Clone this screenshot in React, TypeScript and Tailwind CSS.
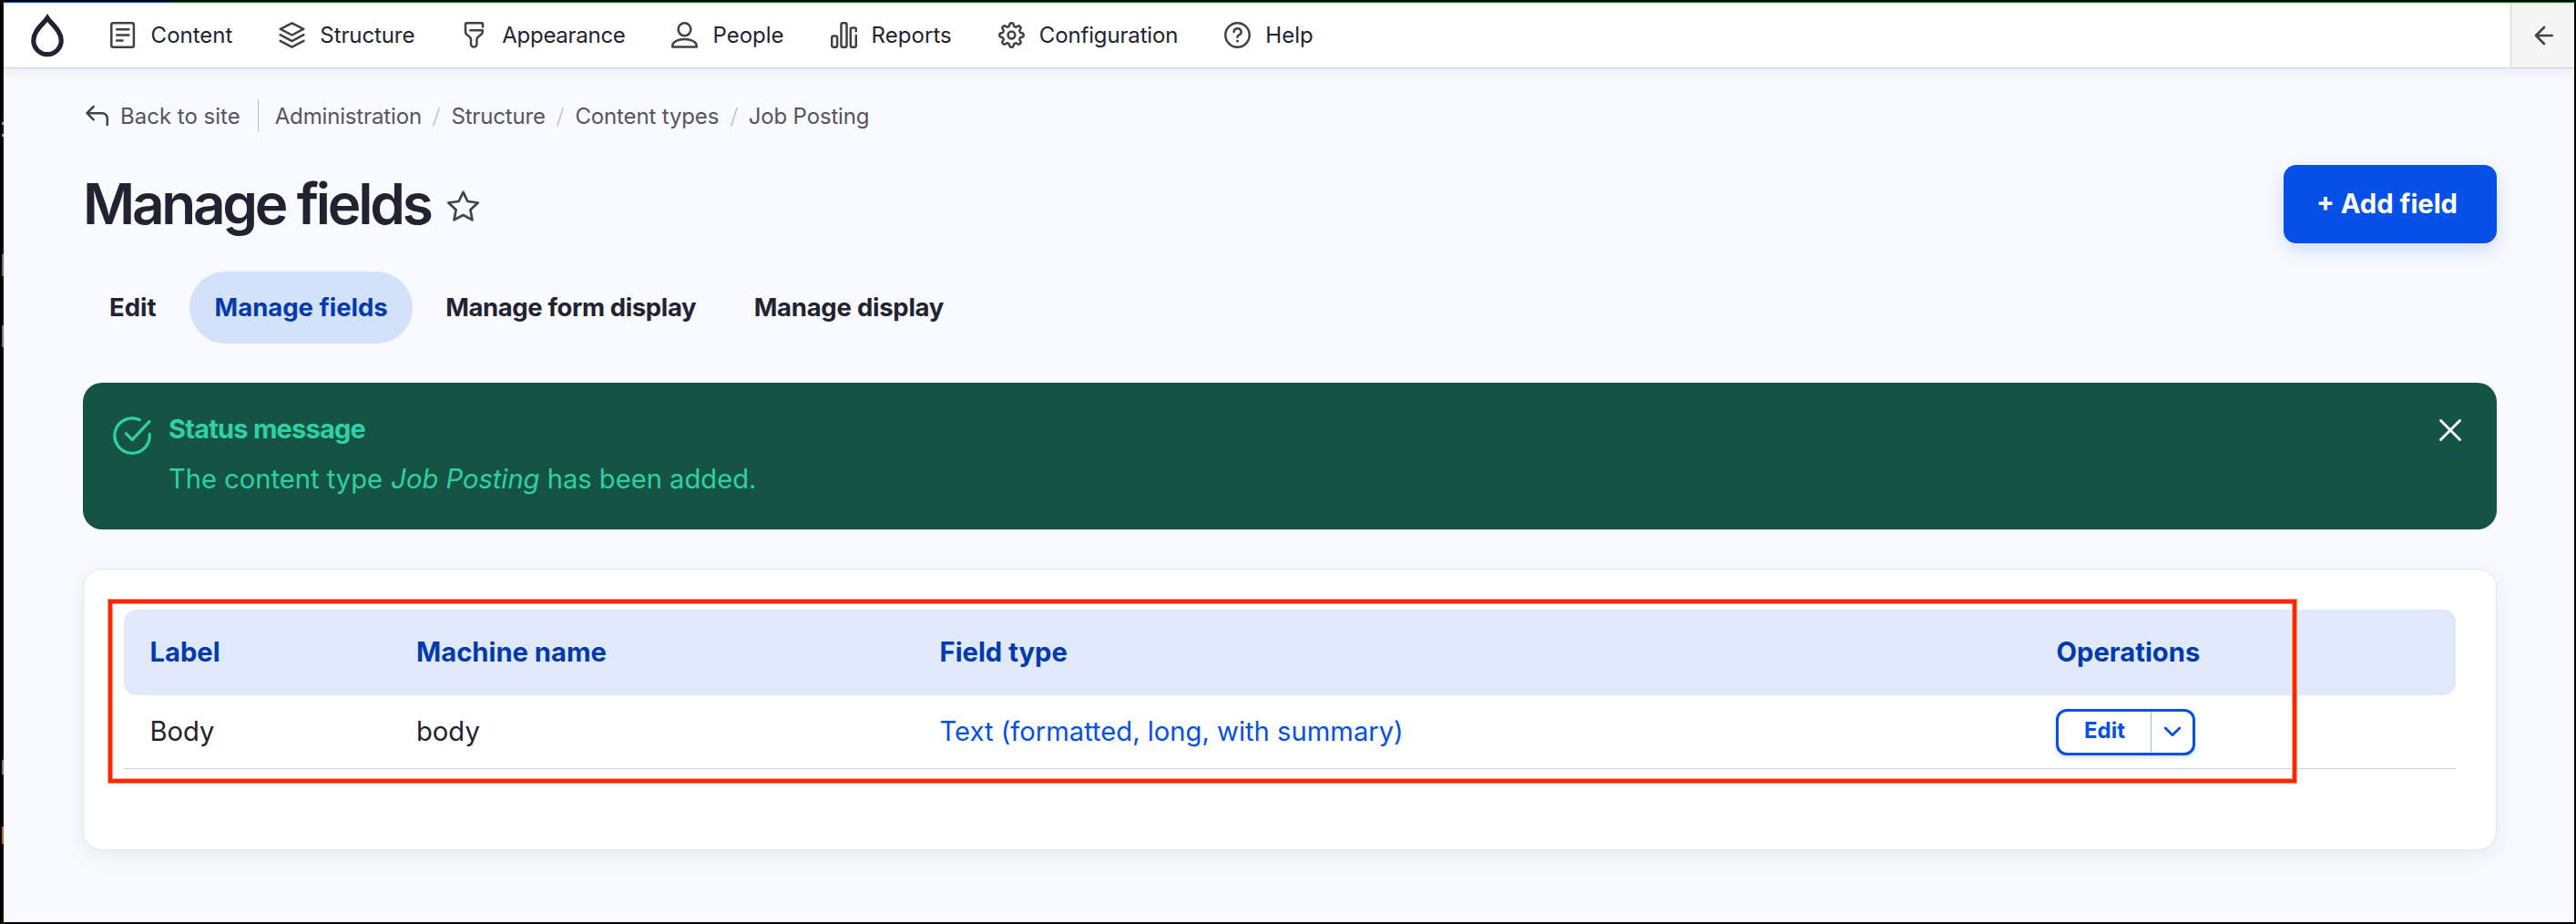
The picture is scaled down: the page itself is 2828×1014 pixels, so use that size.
import React from "react";

type IconProps = { children: React.ReactNode };

function Icon({ children }: IconProps) {
  return (
    <span className="flex w-9 shrink-0 items-center justify-center">
      <svg
        className="size-[29px] shrink-0 text-[#414247]"
        viewBox="0 0 29 29"
        fill="none"
        stroke="currentColor"
        strokeWidth="2.5"
        strokeLinecap="round"
        strokeLinejoin="round"
      >
        {children}
      </svg>
    </span>
  );
}

/* Closed outline of an eight-toothed gear centred in a 29-unit box. */
const gearPath =
  Array.from({ length: 160 }, (_, i) => {
    const a = (i / 160) * Math.PI * 2;
    const r = 11.5 + 1.75 * Math.tanh(1.9 * Math.cos(8 * a));
    const x = 14.5 + r * Math.sin(a);
    const y = 14.5 - r * Math.cos(a);
    return `${i ? "L" : "M"}${x.toFixed(2)} ${y.toFixed(2)}`;
  }).join("") + "Z";

const nav = [
  {
    label: "Content",
    className: "tracking-normal",
    icon: (
      <>
        <rect x="1.3" y="1.3" width="24.6" height="26.4" rx="2" />
        <path d="M7.2 8.3h13.200M7.200 14.400h13.200M7.200 20.500h6.400" />
      </>
    ),
  },
  {
    label: "Structure",
    className: "tracking-[-0.1px]",
    icon: (
      <path d="M14.5 1.4 27.2 7.9 14.5 14.5 1.8 7.9ZM1.6 14.2l12.9 6.9 12.9-6.9M1.6 20.8l12.9 6.9 12.9-6.9" />
    ),
  },
  {
    label: "Appearance",
    className: "tracking-[-0.28px]",
    icon: (
      <path d="M24 5.6V2.3a1 1 0 0 0-1-1H6a1 1 0 0 0-1 1v8.6c0 4.4 6 4.2 6 8.3v5.2a3.2 3.2 0 0 0 6.4 0v-5.2c0-4.1 6.3-3.9 6.3-8.3V9.3H10.3" />
    ),
  },
  {
    label: "People",
    className: "tracking-normal",
    icon: (
      <>
        <ellipse cx="14.5" cy="8.3" rx="6.9" ry="7" />
        <path d="M1.3 27.5v-1.3c0-4.3 6-7.2 13.2-7.2s13.2 2.9 13.2 7.2v1.3Z" />
      </>
    ),
  },
  {
    label: "Reports",
    className: "tracking-[0.05px]",
    icon: (
      <>
        <rect x="1.2" y="15.6" width="5.9" height="12.1" rx="1.6" />
        <rect x="11.5" y="1.3" width="6" height="26.4" rx="1.6" />
        <path d="M27.8 10.3V8a1.6 1.6 0 0 0-1.6-1.6h-2.8A1.6 1.6 0 0 0 21.8 8v18.1a1.6 1.6 0 0 0 1.6 1.6h2.8a1.6 1.6 0 0 0 1.6-1.6V15" />
      </>
    ),
  },
  {
    label: "Configuration",
    className: "tracking-[-0.15px]",
    icon: (
      <>
        <path d={gearPath} />
        <circle cx="14.5" cy="14.5" r="3.9" />
      </>
    ),
  },
  {
    label: "Help",
    className: "tracking-normal",
    icon: (
      <>
        <circle cx="14.5" cy="14.5" r="13.2" />
        <path d="M10.6 10.9a4 3.8 0 1 1 5.7 3.5c-1.3.7-1.8 1.1-1.8 2.4" />
        <circle cx="14.5" cy="20.9" r="1.5" fill="currentColor" stroke="none" />
      </>
    ),
  },
];

const crumbs = ["Administration", "Structure", "Content types", "Job Posting"];

const tabs = [
  { label: "Edit", className: "px-[28px]" },
  {
    label: "Manage fields",
    className: "rounded-[40px] bg-[#d4e1fb] px-[27.5px] text-[#003aad]",
  },
  { label: "Manage form display", className: "px-[27.5px] tracking-[-0.38px]" },
  { label: "Manage display", className: "px-[27.5px] tracking-[-0.25px]" },
];

function TopBar() {
  return (
    <header className="z-10 flex h-[72px] shrink-0 items-stretch border-b border-[#d0d1d8] bg-white shadow-[0_3px_10px_rgba(0,0,0,0.07)]">
      <div className="flex grow items-center pl-[28.5px]">
        <svg className="h-[48px] w-[38px] shrink-0" viewBox="0 0 38 48" fill="none">
          <path
            d="M19 4.7C14.5 11.5 3.8 18.5 3.8 29.5a15.2 15.2 0 0 0 30.4 0C34.2 18.5 23.5 11.5 19 4.7Z"
            stroke="#222330"
            strokeWidth="5.2"
            strokeMiterlimit="8"
          />
        </svg>
        <nav className="ml-[46.5px] flex items-center gap-[47.4px]">
          {nav.map((n) => (
            <a key={n.label} className="flex items-center gap-[12.6px]">
              <Icon>{n.icon}</Icon>
              <span className={n.className}>{n.label}</span>
            </a>
          ))}
        </nav>
      </div>
      <button className="flex w-[70px] items-center justify-center border-l border-[#d0d1d8] bg-[#f5f5f5]">
        <svg className="ml-[2px] size-[22px]" viewBox="0 0 22 22" fill="none" stroke="#414247" strokeWidth="2.6" strokeLinecap="round" strokeLinejoin="round">
          <path d="M11 2 2 11l9 9M2 11h17.7" />
        </svg>
      </button>
    </header>
  );
}

function Breadcrumb() {
  return (
    <div className="flex h-9 items-center text-[#545560]">
      <svg className="ml-[2px] h-[24px] w-[27px]" viewBox="0 0 27 24" fill="none" stroke="#414247" strokeWidth="2.5" strokeLinecap="round" strokeLinejoin="round">
        <path d="M9.7 2 2.5 9.2l7.2 7.2M2.5 9.2h16.8a5.5 5.5 0 0 1 5.5 5.5V22" />
      </svg>
      <span className="ml-[12px] pt-px">Back to site</span>
      <span className="ml-[19px] h-9 w-px bg-[#bcbdc6]" />
      <div className="ml-[18px] flex items-center pt-px">
        {crumbs.map((c, i) => (
          <React.Fragment key={c}>
            {i > 0 && (
              <svg className="ml-[11.5px] mr-[11px] h-[22px] w-[10px]" viewBox="0 0 10 22" stroke="#c6c7cd" strokeWidth="1.8">
                <path d="M8.3 1 1.700 21.500" />
              </svg>
            )}
            <span className="tracking-[-0.15px]">{c}</span>
          </React.Fragment>
        ))}
      </div>
    </div>
  );
}

function StatusMessage() {
  return (
    <section className="mt-[43px] flex h-[161px] items-start rounded-[21px] bg-[#155445] pl-[33px] pr-[24px] text-[29.15px] text-[#2fd0a5]">
      <svg className="mt-[37px] size-[42px] shrink-0" viewBox="0 0 42 42" fill="none" stroke="currentColor" strokeWidth="3.2" strokeLinecap="round" strokeLinejoin="round">
        <path d="M29.2 3.7A19.2 19.2 0 1 0 40.2 19.3" />
        <path d="m14.3 18.7 6.9 7L40 5.7" />
      </svg>
      <div className="ml-[19px] mt-[24px] grow">
        <h2 className="h-[54px] text-[29px] font-bold leading-[54px] tracking-[-0.78px]">Status message</h2>
        <p className="leading-[55px]">
          The content type <em className="ml-[1px]">Job Posting</em> has been added.
        </p>
      </div>
      <button className="mt-[24px] flex size-[55px] items-center justify-center rounded-[14px] border border-[#0550e6]/15">
        <svg className="size-[26px]" viewBox="0 0 26 26" stroke="#fff" strokeWidth="2.9" strokeLinecap="round">
          <path d="m2.5 2.5 21 21M23.5 2.5l-21 21" />
        </svg>
      </button>
    </section>
  );
}

function FieldsTable() {
  return (
    <section className="mt-[43px] h-[309px] rounded-[21px] border border-[#e6e7ea] bg-white px-[44px] pt-[44px] shadow-[0_6px_20px_rgba(20,45,82,0.08)]">
      <div className="relative text-[29.2px]">
        <div className="grid h-[94px] grid-cols-[292px_574px_1226px_1fr] items-center rounded-[14px] bg-[#e0e9fc] font-bold text-[#003aad]">
          <span className="pl-[28.5px]">Label</span>
          <span className="pl-[29px]">Machine name</span>
          <span className="pl-[29.5px]">Field type</span>
          <span className="pl-[29.5px]">Operations</span>
        </div>
        <div className="grid h-[81px] grid-cols-[292px_574px_1226px_1fr] items-center border-b border-[#d4d4d8]">
          <span className="pl-[28.5px]">Body</span>
          <span className="pl-[29px]">body</span>
          <a className="pl-[29.5px] text-[#0550e6]">Text (formatted, long, with summary)</a>
          <div className="ml-[29px] flex h-[51px] w-[153px] items-stretch rounded-[12px] border-[3px] border-[#0550e6] bg-white text-[#0550e6] shadow-[0_2px_5px_rgba(5,80,230,0.18)]">
            <button className="w-[102px] border-r border-[#9dbaf5] pb-[3px] text-[23.9px] font-bold">Edit</button>
            <button className="flex grow items-center justify-center">
              <svg className="h-[14px] w-[20px]" viewBox="0 0 20 14" fill="none" stroke="currentColor" strokeWidth="2.7" strokeLinecap="round" strokeLinejoin="round">
                <path d="m2.2 3 7.8 7.8L17.8 3" />
              </svg>
            </button>
          </div>
        </div>
        {/* Annotation frame drawn over the table */}
        <div className="pointer-events-none absolute -left-[18px] -top-[12px] h-[203px] w-[2404px] border border-[#ff9a86]">
          <div className="h-full border-[4px] border-[#ff2600]">
            <div className="h-full border border-[#ff9a86]" />
          </div>
        </div>
      </div>
    </section>
  );
}

/* Window fragments visible along the left edge */
function EdgeStrip() {
  return (
    <div className="flex w-[4px] shrink-0 flex-col border-l-2 border-black bg-[#16120f]">
      <span className="mt-[134px] h-[3px] bg-[#9b9b9b]" />
      <span className="mt-[10px] h-[3px] bg-[#9b9b9b]" />
      <span className="mt-[129px] h-[24px] bg-[#80608a]" />
      <span className="mt-[54px] h-[24px] bg-[#77777a]" />
      <span className="mt-[453px] h-[16px] bg-[#77777a]" />
      <span className="mt-[57px] h-[19px] bg-[#b5653c]" />
    </div>
  );
}

export default function App() {
  return (
    <div className="flex h-[1014px] w-[2828px] overflow-hidden bg-black font-['Inter',sans-serif] text-[24px] leading-none text-[#222330]">
      <EdgeStrip />
      <div className="flex w-[2822px] flex-col pb-[2px] pt-[2px]">
        <div className="flex h-px shrink-0">
          <span className="w-[186px] bg-[#0550e6]" />
          <span className="grow bg-[#0b7a0b]" />
        </div>
        <TopBar />
        <main className="grow bg-[#f9faff] pl-[87px] pr-[85px] pt-[34px]">
          <Breadcrumb />
          <div className="mt-[36px] flex h-[86px] items-center justify-between">
            <div className="flex items-center">
              <h1 className="text-[62px] font-semibold tracking-[-3.25px]">Manage fields</h1>
              <svg className="ml-[18px] mt-[4px] h-[36px] w-[37px]" viewBox="0 0 37 36" fill="none" stroke="#414247" strokeWidth="2.7" strokeLinejoin="round">
                <path d="m18.5 2.8 4.9 10.2 11.3 1.5-8.3 7.8 2.1 11.1-10-5.4-10 5.4 2.1-11.1-8.3-7.8 11.3-1.5Z" />
              </svg>
            </div>
            <button className="flex h-[86px] w-[234px] items-center justify-center rounded-[14px] bg-[#0550e6] pr-[7px] text-[29.2px] font-bold text-white shadow-[0_7px_20px_rgba(5,80,230,0.18)]">
              + Add field
            </button>
          </div>
          <nav className="ml-px mt-[31px] flex h-[79px] items-stretch gap-[8.5px] text-[27.5px] font-bold">
            {tabs.map((t) => (
              <a key={t.label} className={`flex items-center ${t.className}`}>
                {t.label}
              </a>
            ))}
          </nav>
          <StatusMessage />
          <FieldsTable />
        </main>
      </div>
    </div>
  );
}
